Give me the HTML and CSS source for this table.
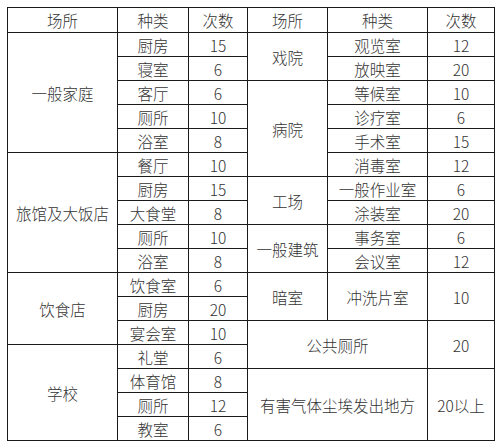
FILE: index.html
```html
<!DOCTYPE html>
<html lang="zh">
<head>
<meta charset="utf-8">
<link rel="stylesheet" href="styles.css">
</head>
<body>
<table class="grid">
  <colgroup>
    <col class="c1"><col class="c2"><col class="c3"><col class="c4"><col class="c5"><col class="c6">
  </colgroup>
  <thead>
    <tr class="head"><th>场所</th><th>种类</th><th>次数</th><th>场所</th><th>种类</th><th>次数</th></tr>
  </thead>
  <tbody>
    <tr><td rowspan="5">一般家庭</td><td>厨房</td><td>15</td><td rowspan="2">戏院</td><td>观览室</td><td>12</td></tr>
    <tr><td>寝室</td><td>6</td><td>放映室</td><td>20</td></tr>
    <tr><td>客厅</td><td>6</td><td rowspan="4">病院</td><td>等候室</td><td>10</td></tr>
    <tr><td>厕所</td><td>10</td><td>诊疗室</td><td>6</td></tr>
    <tr><td>浴室</td><td>8</td><td>手术室</td><td>15</td></tr>
    <tr><td rowspan="5">旅馆及大饭店</td><td>餐厅</td><td>10</td><td>消毒室</td><td>12</td></tr>
    <tr><td>厨房</td><td>15</td><td rowspan="2">工场</td><td>一般作业室</td><td>6</td></tr>
    <tr><td>大食堂</td><td>8</td><td>涂装室</td><td>20</td></tr>
    <tr><td>厕所</td><td>10</td><td rowspan="2">一般建筑</td><td>事务室</td><td>6</td></tr>
    <tr><td>浴室</td><td>8</td><td>会议室</td><td>12</td></tr>
    <tr><td rowspan="3">饮食店</td><td>饮食室</td><td>6</td><td rowspan="2">暗室</td><td rowspan="2">冲洗片室</td><td rowspan="2">10</td></tr>
    <tr><td>厨房</td><td>20</td></tr>
    <tr><td>宴会室</td><td>10</td><td colspan="2" rowspan="2">公共厕所</td><td rowspan="2">20</td></tr>
    <tr><td rowspan="4">学校</td><td>礼堂</td><td>6</td></tr>
    <tr><td>体育馆</td><td>8</td><td colspan="2" rowspan="3">有害气体尘埃发出地方</td><td rowspan="3">20以上</td></tr>
    <tr><td>厕所</td><td>12</td></tr>
    <tr><td>教室</td><td>6</td></tr>
  </tbody>
</table>
</body>
</html>
```
FILE: styles.css
```css
html, body {
  margin: 0;
  padding: 0;
  background: #ffffff;
}
body {
  padding: 7px 0 0 7px;
  font-family: "Noto Sans CJK SC", "Noto Sans", sans-serif;
  font-size: 15.5px;
  font-weight: 300;
  color: #333333;
}
.grid {
  border-collapse: collapse;
  table-layout: fixed;
  width: 487px;
}
.c1 { width: 110px; }
.c2 { width: 71px; }
.c3 { width: 59px; }
.c4 { width: 80px; }
.c5 { width: 100px; }
.c6 { width: 67px; }
.grid th, .grid td {
  border: 1px solid #1a1a1a;
  padding: 0;
  text-align: center;
  vertical-align: middle;
  font-weight: 300;
  line-height: 20px;
  height: 23px;
  white-space: nowrap;
}
.grid .head th {
  height: 24px;
}
```
